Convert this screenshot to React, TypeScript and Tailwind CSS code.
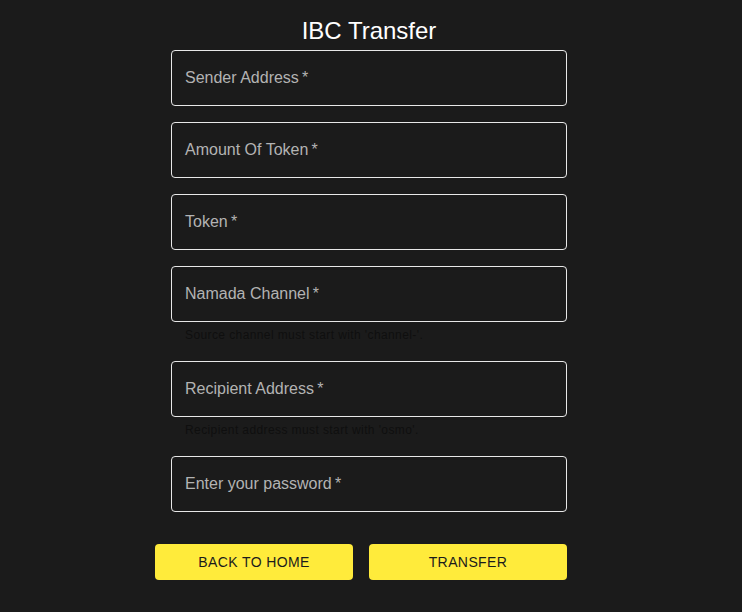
import React from 'react';

type Field = {
  label: string;
  helper?: string;
};

const fields: Field[] = [
  { label: 'Sender Address' },
  { label: 'Amount Of Token' },
  { label: 'Token' },
  { label: 'Namada Channel', helper: "Source channel must start with 'channel-'." },
  { label: 'Recipient Address', helper: "Recipient address must start with 'osmo'." },
  { label: 'Enter your password' },
];

function OutlinedField({ label, helper }: Field): JSX.Element {
  return (
    <div className="flex flex-col">
      <div className="h-[56px] rounded border border-white/90 flex items-center px-[13px] text-base text-[#b3b3b3]">
        <span>
          {label}
          {'\u2009*'}
        </span>
      </div>
      {helper && (
        <p className="mt-[3px] ml-[14px] text-xs leading-[20px] tracking-[0.4px] text-[#0f0f0f]">
          {helper}
        </p>
      )}
    </div>
  );
}

export default function App(): JSX.Element {
  return (
    <div
      className="min-h-[612px] bg-[#1b1b1b] flex justify-center pr-[4px]"
      style={{ fontFamily: '"Liberation Sans", Arial, sans-serif' }}
    >
      <div className="w-[396px] flex flex-col pt-[14px]">
        <h1 className="text-center text-[24px] leading-[34px] text-white">IBC Transfer</h1>
        <div className="mt-[2px] flex flex-col gap-4">
          {fields.map((f) => (
            <OutlinedField key={f.label} {...f} />
          ))}
        </div>
        <div className="mt-[32px] -ml-4 grid grid-cols-2 gap-4">
          <button className="h-[36px] rounded bg-[#ffeb3b] text-sm tracking-[0.4px] text-[#1b1b1b]">
            BACK TO HOME
          </button>
          <button className="h-[36px] rounded bg-[#ffeb3b] text-sm tracking-[0.4px] text-[#1b1b1b]">
            TRANSFER
          </button>
        </div>
      </div>
    </div>
  );
}
